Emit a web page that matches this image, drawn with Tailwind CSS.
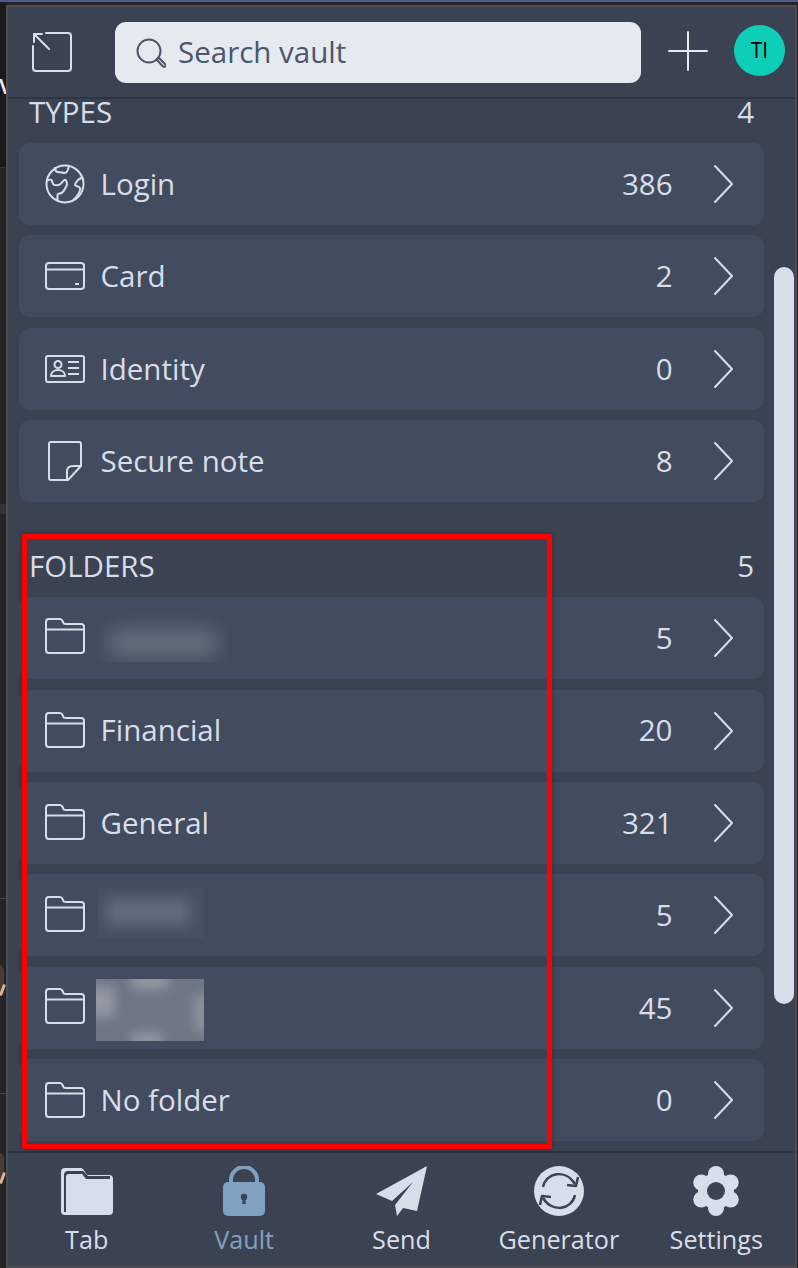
<!DOCTYPE html>
<html lang="en">
<head>
  <meta charset="UTF-8" />
  <title>Vault</title>
  <script src="https://cdn.jsdelivr.net/npm/@tailwindcss/browser@4"></script>
</head>
<body class="relative h-[1268px] w-[798px] overflow-hidden bg-[#252525] font-['Open_Sans',sans-serif] text-[29.5px] text-[#d8dee9]">
  <div class="h-[2px] bg-[#4c5a8c]"></div>

  <!-- page behind the popup, only a sliver shows on the left -->
  <div class="absolute left-0 top-[2px] h-[1266px] w-[6px] overflow-hidden">
    <div class="h-[166px] border-b border-[#333] bg-[#1a1a1a]"></div>
    <div class="absolute left-0 top-[74px] h-[18px] w-[6px] overflow-hidden"><span class="absolute left-[-1px] top-[-1px] text-[24px] font-semibold leading-none text-[#e5e9f0]">V</span></div>
    <div class="absolute left-0 top-[502px] h-[10px] w-[6px] bg-[#333]"></div>
    <div class="absolute left-0 top-[896px] h-px w-[6px] bg-[#444]"></div>
    <div class="absolute left-[-10px] top-[962px] h-[32px] w-[14px] rounded-full bg-[#4a3b37]"></div>
    <div class="absolute left-[1px] top-[982px] h-[12px] w-[3px] rotate-[20deg] rounded-full bg-[#e0b090]"></div>
    <div class="absolute left-0 top-[1091px] h-px w-[6px] bg-[#444]"></div>
    <div class="absolute left-[-10px] top-[1150px] h-[32px] w-[14px] rounded-full bg-[#4a3b37]"></div>
    <div class="absolute left-[1px] top-[1170px] h-[12px] w-[3px] rotate-[20deg] rounded-full bg-[#e0b090]"></div>
  </div>

  <div class="relative ml-[6px] mr-[1px] mt-[3px] flex h-[1263px] flex-col border-2 border-[#4a4d55] bg-[#3b4252]">
    <!-- header -->
    <header class="flex h-[92px] shrink-0 items-center border-b-2 border-[#2e3440] pt-[1px]">
      <svg class="ml-[24px] -mt-[2px] h-[40px] w-[40px]" viewBox="0 0 40 40" fill="none" stroke="#d8dee9" stroke-width="2" stroke-linecap="round" stroke-linejoin="round">
        <path d="M14 1h22a3 3 0 0 1 3 3v32a3 3 0 0 1-3 3H4a3 3 0 0 1-3-3V14"/>
        <path d="M2 2l15 15M2 2v8M2 2h8"/>
      </svg>
      <div class="ml-[43px] flex h-[61px] w-[526px] items-center rounded-[11px] bg-[#e5e9f0] pl-[21px] text-[#4c566a]">
        <svg class="h-[30px] w-[30px]" viewBox="0 0 30 30" fill="none" stroke="#4c566a" stroke-width="2" stroke-linejoin="round">
          <circle cx="13" cy="13" r="11.5"/>
          <path d="M20.5 21.5l2-2 6.5 6.5a1.4 1.4 0 0 1-2 2.5z"/>
        </svg>
        <span class="ml-[12px]">Search vault</span>
      </div>
      <svg class="ml-[27px] -mt-[4px] h-[40px] w-[40px]" viewBox="0 0 40 40" stroke="#e5e9f0" stroke-width="2" stroke-linecap="round">
        <path d="M20 1v38M1 20h38"/>
      </svg>
      <div class="ml-[26px] -mt-[4px] flex h-[51px] w-[51px] items-center justify-center rounded-full bg-[#0fceb8] text-[21px] text-black">TI</div>
    </header>

    <!-- content -->
    <main class="relative flex-1 pl-[11px] pr-[31px]">
      <div class="flex h-[27px] items-center justify-between pb-[2px] pl-[10px] pr-[10px] leading-[25px]"><span>TYPES</span><span>4</span></div>

      <div class="mt-[17px] flex flex-col gap-[10.4px]">
        <div class="flex h-[82px] items-center rounded-[11px] bg-[#434c5e] pl-[26px] pr-[30px]">
          <svg class="h-[40px] w-[40px]" viewBox="0 0 40 40" fill="none" stroke="#d8dee9" stroke-width="2" stroke-linejoin="round">
            <circle cx="20" cy="20" r="18.5"/>
            <path d="M10 3c0 3 1 5 3 5s5 1 7 1 3-3 4-7"/>
            <path d="M1.5 17c2-1 4-2 5-1s1 5 3 5 4 1 6-1 4-5 5-4 2 4 1 6-3 6-5 7-4 0-4 2 0 4 0 6"/>
            <path d="M38 13c-2 1-4 2-5 3s-3 4-3 5 4 1 5 3-1 5-3 8-3 3-4 4"/>
          </svg>
          <span class="ml-[15.5px] flex-1">Login</span>
          <span>386</span>
          <svg class="ml-[40.5px] h-[40px] w-[21px]" viewBox="0 0 21 40" fill="none" stroke="#d8dee9" stroke-width="2" stroke-linecap="round" stroke-linejoin="round"><path d="M2 2l17 18L2 38"/></svg>
        </div>
        <div class="flex h-[82px] items-center rounded-[11px] bg-[#434c5e] pl-[26px] pr-[30px]">
          <svg class="h-[40px] w-[40px]" viewBox="0 0 40 40" fill="none" stroke="#d8dee9" stroke-width="2" stroke-linejoin="round">
            <rect x="1" y="7" width="38" height="26" rx="3"/>
            <path d="M1 13.5h38M30 28h4"/>
          </svg>
          <span class="ml-[15.5px] flex-1">Card</span>
          <span>2</span>
          <svg class="ml-[40.5px] h-[40px] w-[21px]" viewBox="0 0 21 40" fill="none" stroke="#d8dee9" stroke-width="2" stroke-linecap="round" stroke-linejoin="round"><path d="M2 2l17 18L2 38"/></svg>
        </div>
        <div class="flex h-[82px] items-center rounded-[11px] bg-[#434c5e] pl-[26px] pr-[30px]">
          <svg class="h-[40px] w-[40px]" viewBox="0 0 40 40" fill="none" stroke="#d8dee9" stroke-width="2" stroke-linejoin="round">
            <rect x="1" y="7" width="38" height="26" rx="2"/>
            <circle cx="13" cy="15.5" r="3.5"/>
            <path d="M6 27c0-8 14-8 14 0zM23 13h11M23 19h11M23 25h11"/>
          </svg>
          <span class="ml-[15.5px] flex-1">Identity</span>
          <span>0</span>
          <svg class="ml-[40.5px] h-[40px] w-[21px]" viewBox="0 0 21 40" fill="none" stroke="#d8dee9" stroke-width="2" stroke-linecap="round" stroke-linejoin="round"><path d="M2 2l17 18L2 38"/></svg>
        </div>
        <div class="flex h-[82px] items-center rounded-[11px] bg-[#434c5e] pl-[26px] pr-[30px]">
          <svg class="h-[40px] w-[40px]" viewBox="0 0 40 40" fill="none" stroke="#d8dee9" stroke-width="2" stroke-linejoin="round">
            <path d="M6 1h28a2 2 0 0 1 2 2v22L23 39H6a2 2 0 0 1-2-2V3a2 2 0 0 1 2-2z"/>
            <path d="M36 25h-8c-4 0-6 2-6 5v9"/>
          </svg>
          <span class="ml-[15.5px] flex-1">Secure note</span>
          <span>8</span>
          <svg class="ml-[40.5px] h-[40px] w-[21px]" viewBox="0 0 21 40" fill="none" stroke="#d8dee9" stroke-width="2" stroke-linecap="round" stroke-linejoin="round"><path d="M2 2l17 18L2 38"/></svg>
        </div>
      </div>

      <div class="mt-[50px] flex h-[28px] items-center justify-between pb-[1px] pl-[10px] pr-[10px] leading-[26px]"><span>FOLDERS</span><span>5</span></div>

      <div class="mt-[17px] flex flex-col gap-[10.4px]">
        <div class="flex h-[82px] items-center rounded-[11px] bg-[#434c5e] pl-[26px] pr-[30px]">
          <svg class="h-[40px] w-[40px]" viewBox="0 2 40 40" fill="none" stroke="#d8dee9" stroke-width="2" stroke-linejoin="round"><path d="M4 3h11c2 0 2 1 3 3s1 2 3 2h15a3 3 0 0 1 3 3v23a3 3 0 0 1-3 3H4a3 3 0 0 1-3-3V6a3 3 0 0 1 3-3zM1 13.5h38"/></svg>
          <div class="ml-[13px] flex-1">
            <div class="h-[48px] w-[130px] overflow-hidden"><div class="ml-[12px] mt-[16px] h-[26px] w-[106px] bg-[#d8dee9]/25 blur-[10px]"></div></div>
          </div>
          <span>5</span>
          <svg class="ml-[40.5px] h-[40px] w-[21px]" viewBox="0 0 21 40" fill="none" stroke="#d8dee9" stroke-width="2" stroke-linecap="round" stroke-linejoin="round"><path d="M2 2l17 18L2 38"/></svg>
        </div>
        <div class="flex h-[82px] items-center rounded-[11px] bg-[#434c5e] pl-[26px] pr-[30px]">
          <svg class="h-[40px] w-[40px]" viewBox="0 1 40 40" fill="none" stroke="#d8dee9" stroke-width="2" stroke-linejoin="round"><path d="M4 3h11c2 0 2 1 3 3s1 2 3 2h15a3 3 0 0 1 3 3v23a3 3 0 0 1-3 3H4a3 3 0 0 1-3-3V6a3 3 0 0 1 3-3zM1 13.5h38"/></svg>
          <span class="ml-[15.5px] flex-1">Financial</span>
          <span>20</span>
          <svg class="ml-[40.5px] h-[40px] w-[21px]" viewBox="0 0 21 40" fill="none" stroke="#d8dee9" stroke-width="2" stroke-linecap="round" stroke-linejoin="round"><path d="M2 2l17 18L2 38"/></svg>
        </div>
        <div class="flex h-[82px] items-center rounded-[11px] bg-[#434c5e] pl-[26px] pr-[30px]">
          <svg class="h-[40px] w-[40px]" viewBox="0 1 40 40" fill="none" stroke="#d8dee9" stroke-width="2" stroke-linejoin="round"><path d="M4 3h11c2 0 2 1 3 3s1 2 3 2h15a3 3 0 0 1 3 3v23a3 3 0 0 1-3 3H4a3 3 0 0 1-3-3V6a3 3 0 0 1 3-3zM1 13.5h38"/></svg>
          <span class="ml-[15.5px] flex-1">General</span>
          <span>321</span>
          <svg class="ml-[40.5px] h-[40px] w-[21px]" viewBox="0 0 21 40" fill="none" stroke="#d8dee9" stroke-width="2" stroke-linecap="round" stroke-linejoin="round"><path d="M2 2l17 18L2 38"/></svg>
        </div>
        <div class="flex h-[82px] items-center rounded-[11px] bg-[#434c5e] pl-[26px] pr-[30px]">
          <svg class="h-[40px] w-[40px]" viewBox="0 1 40 40" fill="none" stroke="#d8dee9" stroke-width="2" stroke-linejoin="round"><path d="M4 3h11c2 0 2 1 3 3s1 2 3 2h15a3 3 0 0 1 3 3v23a3 3 0 0 1-3 3H4a3 3 0 0 1-3-3V6a3 3 0 0 1 3-3zM1 13.5h38"/></svg>
          <div class="ml-[13px] flex-1">
            <div class="-mt-[4px] h-[50px] w-[106px] overflow-hidden bg-[#475063]"><div class="ml-[8px] mt-[11px] h-[26px] w-[84px] bg-[#d8dee9]/20 blur-[7px]"></div></div>
          </div>
          <span>5</span>
          <svg class="ml-[40.5px] h-[40px] w-[21px]" viewBox="0 0 21 40" fill="none" stroke="#d8dee9" stroke-width="2" stroke-linecap="round" stroke-linejoin="round"><path d="M2 2l17 18L2 38"/></svg>
        </div>
        <div class="flex h-[82px] items-center rounded-[11px] bg-[#434c5e] pl-[26px] pr-[30px]">
          <svg class="h-[40px] w-[40px]" viewBox="0 2 40 40" fill="none" stroke="#d8dee9" stroke-width="2" stroke-linejoin="round"><path d="M4 3h11c2 0 2 1 3 3s1 2 3 2h15a3 3 0 0 1 3 3v23a3 3 0 0 1-3 3H4a3 3 0 0 1-3-3V6a3 3 0 0 1 3-3zM1 13.5h38"/></svg>
          <div class="ml-[11px] flex-1">
            <div class="relative mt-[5px] h-[62px] w-[108px] overflow-hidden bg-[#6f7685]">
              <div class="absolute left-[-8px] top-[8px] h-[30px] w-[26px] bg-[#9499a3] blur-[6px]"></div>
              <div class="absolute left-[36px] top-[-8px] h-[18px] w-[36px] bg-[#9499a3] blur-[6px]"></div>
              <div class="absolute right-[-8px] top-[16px] h-[36px] w-[18px] bg-[#8d929d] blur-[6px]"></div>
              <div class="absolute left-[36px] bottom-[-8px] h-[16px] w-[30px] bg-[#9499a3] blur-[6px]"></div>
            </div>
          </div>
          <span>45</span>
          <svg class="ml-[40.5px] h-[40px] w-[21px]" viewBox="0 0 21 40" fill="none" stroke="#d8dee9" stroke-width="2" stroke-linecap="round" stroke-linejoin="round"><path d="M2 2l17 18L2 38"/></svg>
        </div>
        <div class="flex h-[82px] items-center rounded-[11px] bg-[#434c5e] pl-[26px] pr-[30px]">
          <svg class="h-[40px] w-[40px]" viewBox="0 0 40 40" fill="none" stroke="#d8dee9" stroke-width="2" stroke-linejoin="round"><path d="M4 3h11c2 0 2 1 3 3s1 2 3 2h15a3 3 0 0 1 3 3v23a3 3 0 0 1-3 3H4a3 3 0 0 1-3-3V6a3 3 0 0 1 3-3zM1 13.5h38"/></svg>
          <span class="ml-[15.5px] flex-1">No folder</span>
          <span>0</span>
          <svg class="ml-[40.5px] h-[40px] w-[21px]" viewBox="0 0 21 40" fill="none" stroke="#d8dee9" stroke-width="2" stroke-linecap="round" stroke-linejoin="round"><path d="M2 2l17 18L2 38"/></svg>
        </div>
      </div>

      <!-- scrollbar thumb -->
      <div class="absolute right-[1px] top-[168px] h-[737px] w-[20px] rounded-full bg-[#d8dee9]"></div>
    </main>

    <!-- tabs -->
    <footer class="grid h-[115px] shrink-0 grid-cols-5 border-t-2 border-[#2e3440] text-center text-[25.2px]">
      <div class="flex flex-col items-center pt-[13px]">
        <svg class="h-[50px] w-[52px]" viewBox="0 0 52 50" fill="#d8dee9"><path d="M4 2h15c3 0 3 1 5 4s2 3 5 3h19a4 4 0 0 1 4 4v32a4 4 0 0 1-4 4H4a4 4 0 0 1-4-4V6a4 4 0 0 1 4-4z"/><path d="M5 46V11a3 3 0 0 1 3-3h13l4 5h24v-3H27l-5-5H7a4 4 0 0 0-4 4v37z" fill="#3b4252"/></svg>
        <span class="mt-[6px] leading-[34px]">Tab</span>
      </div>
      <div class="flex flex-col items-center pt-[13px] text-[#81a1c1]">
        <svg class="h-[50px] w-[44px]" viewBox="0 0 44 50"><path d="M9 20v-6a13 13 0 0 1 26 0v6" fill="none" stroke="#81a1c1" stroke-width="4"/><rect x="1" y="16" width="42" height="34" rx="5" fill="#81a1c1"/><circle cx="22" cy="31" r="3.2" fill="#3b4252"/><path d="M20.8 32h2.4l.6 6h-3.6z" fill="#3b4252"/></svg>
        <span class="mt-[6px] leading-[34px]">Vault</span>
      </div>
      <div class="flex flex-col items-center pt-[13px]">
        <svg class="h-[50px] w-[52px]" viewBox="0 0 52 50" fill="#d8dee9"><path d="M52 0L1 28l16 7L38 16 20 39l2 11 6-8 14 3z"/></svg>
        <span class="mt-[6px] leading-[34px]">Send</span>
      </div>
      <div class="flex flex-col items-center pt-[13px]">
        <svg class="h-[50px] w-[50px]" viewBox="0 0 50 50" fill="none"><circle cx="25" cy="25" r="25" fill="#d8dee9"/><path d="M9 21C12 6 32 3 41 18M41 29C38 44 18 47 9 32" stroke="#3b4252" stroke-width="2.5"/><path d="M33 19l9 1 2-9M17 31l-9-1-2 9" stroke="#3b4252" stroke-width="2.5" stroke-linejoin="round"/></svg>
        <span class="mt-[6px] leading-[34px]">Generator</span>
      </div>
      <div class="flex flex-col items-center pt-[13px]">
        <svg class="h-[50px] w-[50px]" viewBox="-25 -25 50 50" fill="#d8dee9"><circle r="18"/><circle cy="-17" r="8"/><circle cx="14.7" cy="-8.5" r="8"/><circle cx="14.7" cy="8.5" r="8"/><circle cy="17" r="8"/><circle cx="-14.7" cy="8.5" r="8"/><circle cx="-14.7" cy="-8.5" r="8"/><circle r="9" fill="#3b4252"/></svg>
        <span class="mt-[6px] leading-[34px]">Settings</span>
      </div>
    </footer>
  </div>

  <!-- red annotation -->
  <div class="absolute left-[22px] top-[534px] h-[615px] w-[530px] rounded-[2px] border-[5.5px] border-[#ff0000] shadow-[0_0_5px_rgba(0,0,0,0.35)]"></div>
</body>
</html>
